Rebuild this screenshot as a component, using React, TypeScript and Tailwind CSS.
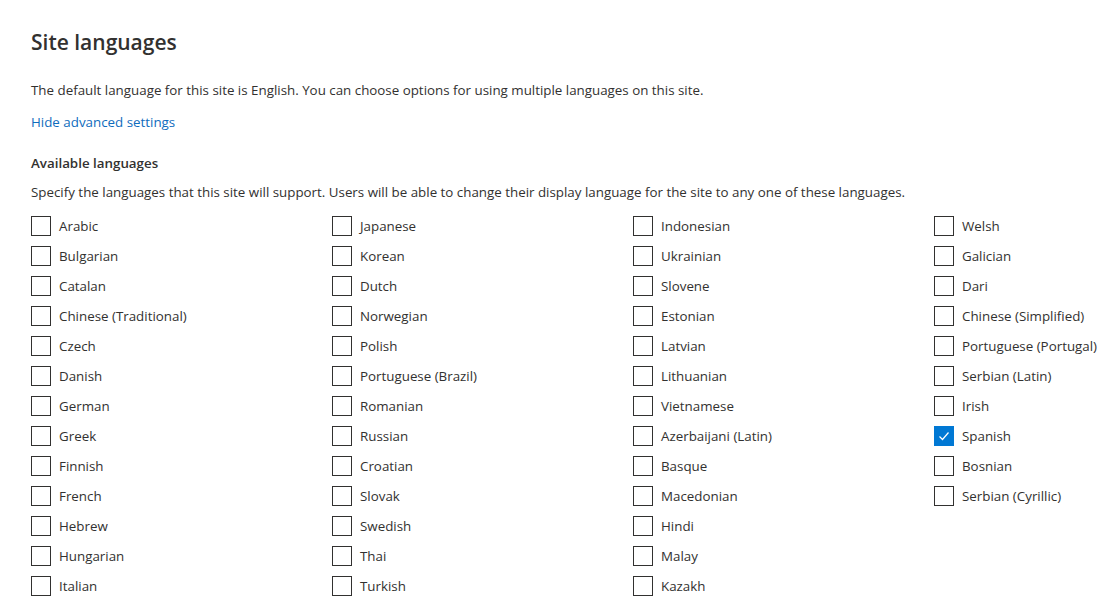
import React from "react";

const cols: string[][] = [
  ["Arabic", "Bulgarian", "Catalan", "Chinese (Traditional)", "Czech", "Danish", "German", "Greek", "Finnish", "French", "Hebrew", "Hungarian", "Italian"],
  ["Japanese", "Korean", "Dutch", "Norwegian", "Polish", "Portuguese (Brazil)", "Romanian", "Russian", "Croatian", "Slovak", "Swedish", "Thai", "Turkish"],
  ["Indonesian", "Ukrainian", "Slovene", "Estonian", "Latvian", "Lithuanian", "Vietnamese", "Azerbaijani (Latin)", "Basque", "Macedonian", "Hindi", "Malay", "Kazakh"],
  ["Welsh", "Galician", "Dari", "Chinese (Simplified)", "Portuguese (Portugal)", "Serbian (Latin)", "Irish", "Spanish", "Bosnian", "Serbian (Cyrillic)"],
];

function Box({ checked }: { checked: boolean }) {
  return checked ? (
    <span className="flex h-5 w-5 shrink-0 items-center justify-center border border-[#0078d4] bg-[#0078d4]">
      <svg width="12" height="12" viewBox="0 0 12 12" fill="none">
        <path d="M1.5 6.5 L4.5 9.5 L10.5 2.5" stroke="white" strokeWidth="1.2" />
      </svg>
    </span>
  ) : (
    <span className="h-5 w-5 shrink-0 border border-[#323130] bg-white" />
  );
}

export default function App() {
  return (
    <div className="h-[609px] overflow-hidden bg-white pl-[31px] pt-[26px] text-[#323130]" style={{ fontFamily: '"Open Sans", "Noto Sans", sans-serif' }}>
      <h1 className="text-[21px] font-semibold leading-[32px]">Site languages</h1>
      <p className="mt-[16px] whitespace-nowrap text-[13.35px] leading-[32px]">
        The default language for this site is English. You can choose options for using multiple languages on this site.
      </p>
      <a className="block text-[13.35px] leading-[32px] text-[#0f6cbd]">Hide advanced settings</a>
      <h2 className="mt-[15px] text-[13.35px] font-semibold leading-[20px]">Available languages</h2>
      <p className="mt-[9px] whitespace-nowrap text-[13.35px] leading-[20px]">
        Specify the languages that this site will support. Users will be able to change their display language for the site to any one of these languages.
      </p>
      <div className="mt-[9px] flex">
        {cols.map((c, i) => (
          <div key={i} className="flex w-[301px] shrink-0 flex-col">
            {c.map((l) => (
              <label key={l} className="flex h-[30px] items-center gap-2 whitespace-nowrap text-[13.35px]">
                <Box checked={l === "Spanish"} />
                <span>{l}</span>
              </label>
            ))}
          </div>
        ))}
      </div>
    </div>
  );
}
